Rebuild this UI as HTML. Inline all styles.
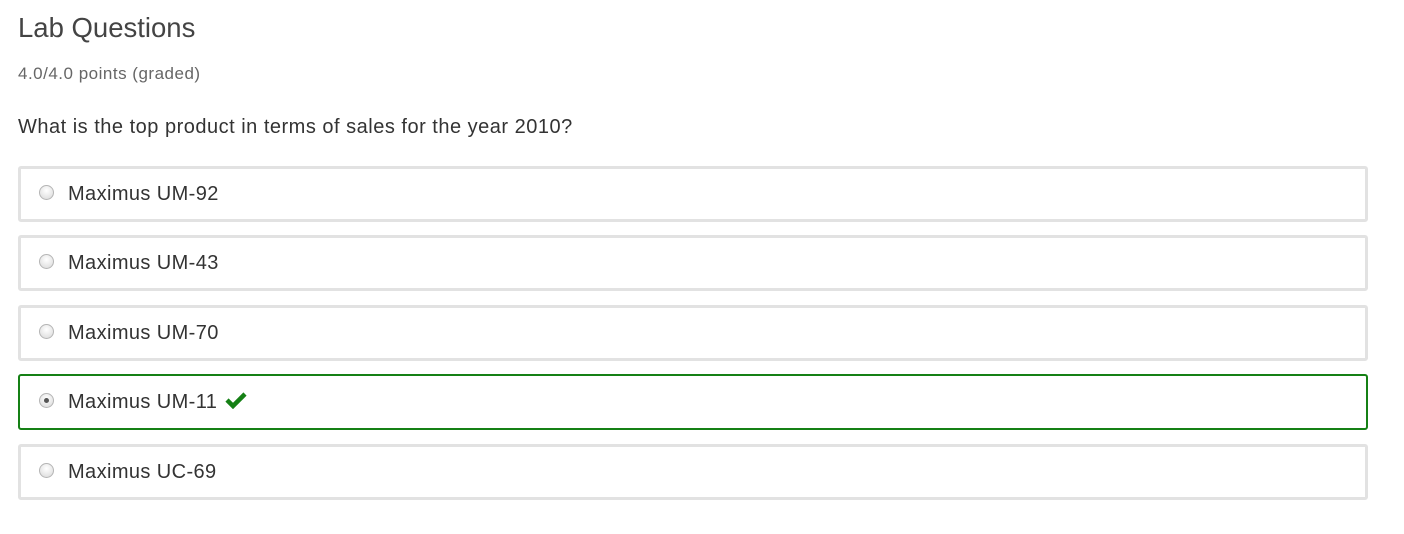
<!DOCTYPE html>
<html><head><style>
body{margin:0;background:#fff;font-family:"Liberation Sans",sans-serif;color:#333;width:1404px;height:534px;position:relative;overflow:hidden}
.a{position:absolute;left:18px;white-space:nowrap}
.box{position:absolute;left:18px;width:1344px;height:50px;border:3px solid #e2e2e2;border-radius:3px}
.box.g{border:2px solid #158015;width:1346px;height:52px}
.r{position:absolute;left:18px;top:16px;width:15px;height:15px;border-radius:50%;border:1px solid #b5b5b5;background:radial-gradient(circle at 50% 35%,#fff,#d8d8d8);box-sizing:border-box}
.g .r{left:19px;top:17px}
.g .r::after{content:"";position:absolute;left:4px;top:4px;width:5px;height:5px;border-radius:50%;background:#555}
.t{position:absolute;left:47px;top:14px;font-size:20px;color:#333;letter-spacing:0.4px}
.g .t{left:48px;top:15px}
</style></head><body>
<div class="a" style="top:12px;font-size:27.5px;color:#444">Lab Questions</div>
<div class="a" style="top:64px;font-size:17px;color:#666;letter-spacing:0.5px">4.0/4.0 points (graded)</div>
<div class="a" style="top:116px;font-size:20px;color:#333;letter-spacing:0.5px">What is the top product in terms of sales for the year 2010?</div>
<div class="box" style="top:166px"><div class="r"></div><div class="t">Maximus UM-92</div></div>
<div class="box" style="top:235px"><div class="r"></div><div class="t">Maximus UM-43</div></div>
<div class="box" style="top:305px"><div class="r"></div><div class="t">Maximus UM-70</div></div>
<div class="box g" style="top:374px"><div class="r"></div><div class="t">Maximus UM-11 <svg width="22" height="18" viewBox="0 0 22 18" style="vertical-align:-1px;margin-left:2px"><path d="M2 9 L8 15 L20 3" fill="none" stroke="#158015" stroke-width="4.5"/></svg></div></div>
<div class="box" style="top:444px"><div class="r"></div><div class="t">Maximus UC-69</div></div>
</body></html>
